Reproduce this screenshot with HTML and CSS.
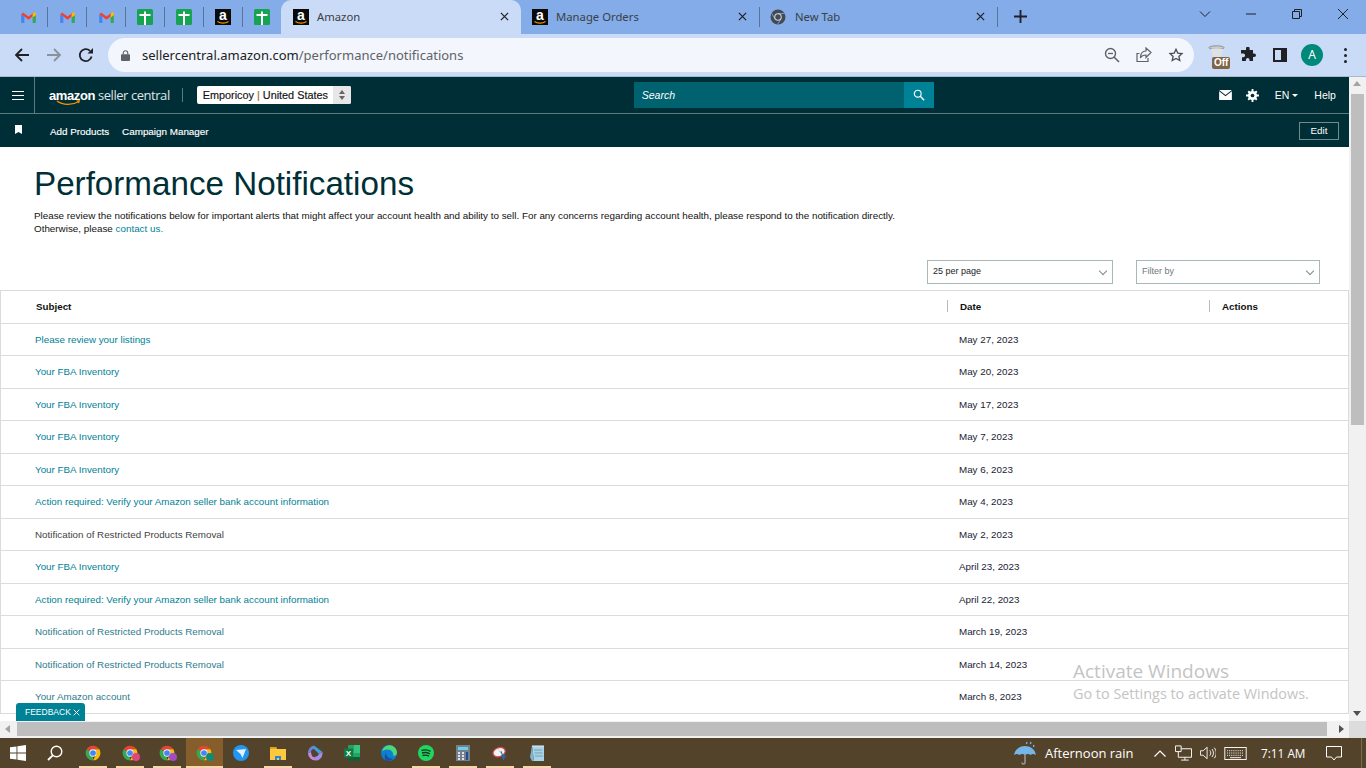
FILE: index.html
```html
<!DOCTYPE html>
<html>
<head>
  <title>Amazon</title>
  <link rel="stylesheet" href="styles.css">
</head>
<body>
  <!-- shared icons -->
  <svg class="icon-defs" width="0" height="0">
    <symbol id="gmail" viewBox="0 0 16 12">
      <path d="M0 3v8a1 1 0 0 0 1 1h2.500V5z" fill="#4285f4"/>
      <path d="M16 3v8a1 1 0 0 1-1 1h-2.500V5z" fill="#34a853"/>
      <path d="M0 3l2-2.500L8 5l6-4.500L12.500 5 8 8.500 3.500 5 0 3z" fill="#ea4335"/>
      <path d="M12.500 2l1.500-1.500c1-.6 2 .2 2 1.200V3.500l-3.500 2.500z" fill="#fbbc04"/>
    </symbol>
    <symbol id="sheet" viewBox="0 0 16 16">
      <rect width="16" height="16" rx="1.500" fill="#16a352"/>
      <path d="M7 2.500h2V5h4.500v2H9v9H7V7H2.500V5H7z" fill="#fff"/>
    </symbol>
    <symbol id="smile" viewBox="0 0 12 3">
      <path d="M.5 .5c3 2.200 8 2.200 11 0" fill="none" stroke="#f79400" stroke-width="1.200"/>
    </symbol>
    <symbol id="chrome" viewBox="0 0 24 24">
      <path d="M2.470 6.500A11 11 0 0 1 21.530 6.500H12A5.500 5.500 0 0 0 7.240 9.250z" fill="#ea4335"/>
      <path d="M21.530 6.500A11 11 0 0 1 12 23L16.760 14.750A5.500 5.500 0 0 0 12 6.500z" fill="#fbbc04"/>
      <path d="M12 23A11 11 0 0 1 2.470 6.500L7.240 9.250A5.500 5.500 0 0 0 12 17.500z" fill="#34a853"/>
      <circle cx="12" cy="12" r="5.500" fill="#fff"/>
      <circle cx="12" cy="12" r="4.300" fill="#4285f4"/>
    </symbol>
    <symbol id="close" viewBox="0 0 10 10">
      <path d="M1 1l8 8M9 1l-8 8" fill="none" stroke="currentColor" stroke-width="1.400"/>
    </symbol>
  </svg>

  <div class="tabstrip">
    <div class="pinned"><svg class="fav-m"><use href="#gmail"/></svg></div>
    <div class="pinned"><svg class="fav-m"><use href="#gmail"/></svg></div>
    <div class="pinned"><svg class="fav-m"><use href="#gmail"/></svg></div>
    <div class="pinned"><svg class="fav"><use href="#sheet"/></svg></div>
    <div class="pinned"><svg class="fav"><use href="#sheet"/></svg></div>
    <div class="pinned"><span class="amz-fav">a<svg class="amz-smile"><use href="#smile"/></svg></span></div>
    <div class="pinned last"><svg class="fav"><use href="#sheet"/></svg></div>
    <div class="tab active">
      <span class="amz-fav">a<svg class="amz-smile"><use href="#smile"/></svg></span>
      <span class="tab-title">Amazon</span>
      <svg class="tab-close"><use href="#close"/></svg>
    </div>
    <div class="tab divided">
      <span class="amz-fav">a<svg class="amz-smile"><use href="#smile"/></svg></span>
      <span class="tab-title">Manage Orders</span>
      <svg class="tab-close"><use href="#close"/></svg>
    </div>
    <div class="tab divided">
      <svg class="fav" viewBox="0 0 16 16">
        <circle cx="8" cy="8" r="7.500" fill="#454a50"/>
        <path d="M8 4.500h6.500M5 10L1.800 4.500M11 10l-3.200 5" stroke="#83ace9" stroke-width=".8"/>
        <circle cx="8" cy="8" r="3.800" fill="#c5d6ef"/>
        <circle cx="8" cy="8" r="2.700" fill="#454a50"/>
      </svg>
      <span class="tab-title">New Tab</span>
      <svg class="tab-close"><use href="#close"/></svg>
    </div>
    <svg class="new-tab" viewBox="0 0 14 14"><path d="M7 0v14M0 7h14" stroke="#202124" stroke-width="2"/></svg>
    <div class="win-controls">
      <svg class="win-btn" viewBox="0 0 12 12"><path d="M1 3.500l5 5 5-5" fill="none" stroke="#202124"/></svg>
      <svg class="win-btn" viewBox="0 0 12 12"><path d="M1 6h10" stroke="#202124"/></svg>
      <svg class="win-btn" viewBox="0 0 12 12"><path d="M1.500 3.500h7v7h-7zM3.500 3.500v-2h7v7h-2" fill="none" stroke="#202124"/></svg>
      <svg class="win-btn" viewBox="0 0 12 12"><path d="M1 1l10 10M11 1L1 11" stroke="#202124"/></svg>
    </div>
  </div>

  <div class="toolbar">
    <div class="tb-btn"><svg viewBox="0 0 16 16" class="tb-ico"><path d="M15 8H2M8 2L2 8l6 6" fill="none" stroke="#202124" stroke-width="1.800"/></svg></div>
    <div class="tb-btn"><svg viewBox="0 0 16 16" class="tb-ico"><path d="M1 8h13M8 2l6 6-6 6" fill="none" stroke="#8a919b" stroke-width="1.800"/></svg></div>
    <div class="tb-btn"><svg viewBox="0 0 16 16" class="tb-ico"><path d="M13.600 9.500A6 6 0 1 1 12 3.800" fill="none" stroke="#202124" stroke-width="1.800"/><path d="M9.500 6.500H15V1z" fill="#202124"/></svg></div>
    <div class="address">
      <svg class="lock" viewBox="0 0 10 12"><path d="M2.500 5V3.300a2.500 2.500 0 0 1 5 0V5" fill="none" stroke="#5f6368" stroke-width="1.200"/><rect y="4.500" width="10" height="7.500" rx="1" fill="#5f6368"/></svg>
      <span class="url"><span class="url-host">sellercentral.amazon.com</span>/performance/notifications</span>
      <svg class="addr-ico" viewBox="0 0 16 16"><circle cx="6.500" cy="6.500" r="5" fill="none" stroke="#5f6368" stroke-width="1.400"/><path d="M10 10l5 5" stroke="#5f6368" stroke-width="1.600"/><path d="M4 6.500h5" stroke="#5f6368" stroke-width="1.300"/></svg>
      <svg class="addr-ico" viewBox="0 0 16 16"><path d="M5 14.500H1V6.500h2.500M15 5.500L10 1v3C6.500 4 4.500 6.500 4.500 11c1.200-2.500 3-3 5.500-3v2.500z" fill="none" stroke="#5f6368" stroke-width="1.200"/><path d="M1 14.500h11V11" fill="none" stroke="#5f6368" stroke-width="1.200"/></svg>
      <svg class="addr-ico" viewBox="0 0 16 16"><path d="M8 2.200l1.800 3.900 4.200.5-3.100 2.800.9 4.200L8 11.500l-3.800 2.100.9-4.200L2 6.600l4.200-.5z" fill="none" stroke="#4a4e53" stroke-width="1.300"/></svg>
    </div>
    <div class="tb-btn cup">
      <svg class="cup-ico" viewBox="0 0 18 12"><ellipse cx="9" cy="2.500" rx="8" ry="2" fill="#c9ccd0" stroke="#8d8d8d"/><path d="M3 4l2 8h9l2-8" fill="#dfe1e4"/></svg>
      <span class="off-badge">Off</span>
    </div>
    <div class="tb-btn puzzle"><svg viewBox="0 0 16 16" class="tb-ico"><path d="M6 1.500a1.800 1.800 0 0 1 3.600 0V3H13v3.500h1.200a1.800 1.800 0 0 1 0 3.600H13V14H9.500v-1.200a1.800 1.800 0 0 0-3.600 0V14H2v-3.800h1.200a1.900 1.900 0 0 0 0-3.800H1V3h5z" fill="#202124"/></svg></div>
    <div class="tb-btn"><svg viewBox="0 0 14 14" class="tb-ico side"><path d="M0 0h14v14H0zM2 2v10h6V2z" fill="#202124" fill-rule="evenodd"/></svg></div>
    <div class="tb-btn"><span class="avatar">A</span></div>
    <div class="tb-btn dots"><i></i><i></i><i></i></div>
  </div>

  <div class="view">
    <div class="page">
      <div class="sc-top">
        <div class="burger"><i></i><i></i><i></i></div>
        <div class="logo">
          <span class="logo-amz">amazon</span><span class="logo-sc">seller central</span>
          <svg class="logo-smile" viewBox="0 0 26 6"><path d="M1 1c6 4.500 16 4.500 23 .5" fill="none" stroke="#f79400" stroke-width="1.200"/><path d="M21 .5l4-.5-1 3.500" fill="#f79400"/></svg>
        </div>
        <span class="logo-sep"></span>
        <div class="acct">
          <span class="acct-name">Emporicoy <b>|</b> United States</span>
          <span class="acct-arrows"><i class="up"></i><i class="down"></i></span>
        </div>
        <div class="search">
          <span class="search-input">Search</span>
          <span class="search-btn"><svg viewBox="0 0 14 14"><circle cx="5.500" cy="5.500" r="4" fill="none" stroke="#fff" stroke-width="1.300"/><path d="M8.500 8.500l4.500 4.500" stroke="#fff" stroke-width="1.700"/></svg></span>
        </div>
        <div class="top-right">
          <svg class="mail" viewBox="0 0 14 11"><path d="M0 0h14L7 5.500z M0 1.500V11h14V1.500L7 7z" fill="#fff"/></svg>
          <svg class="gear" viewBox="0 0 14 14"><circle cx="7" cy="7" r="4.900" fill="#fff"/><path d="M6 0h2v14H6zM0 6h14v2H0zM1.700 3.100l1.400-1.400 9.200 9.200-1.400 1.400zM10.900 1.700l1.400 1.400-9.200 9.200-1.400-1.400z" fill="#fff"/><circle cx="7" cy="7" r="2" fill="#002e36"/></svg>
          <span class="lang">EN</span><i class="lang-caret"></i>
          <span class="help">Help</span>
        </div>
      </div>
      <div class="sc-nav">
        <svg class="bookmark" viewBox="0 0 7 9"><path d="M0 0h7v9L3.500 7 0 9z" fill="#fff"/></svg>
        <a class="nav-link first">Add Products</a>
        <a class="nav-link">Campaign Manager</a>
        <span class="edit-btn">Edit</span>
      </div>

      <div class="head">
        <h1>Performance Notifications</h1>
        <p>Please review the notifications below for important alerts that might affect your account health and ability to sell. For any concerns regarding account health, please respond to the notification directly.<br>Otherwise, please <a class="link">contact us.</a></p>
      </div>

      <div class="filters">
        <div class="select">25 per page<i class="chev"></i></div>
        <div class="select muted">Filter by<i class="chev"></i></div>
      </div>

      <div class="table">
        <div class="row th">
          <div class="cell">Subject</div>
          <div class="cell sep">Date</div>
          <div class="cell sep">Actions</div>
        </div>
        <div class="row"><div class="cell link">Please review your listings</div><div class="cell date">May 27, 2023</div><div class="cell"></div></div>
        <div class="row"><div class="cell link">Your FBA Inventory</div><div class="cell date">May 20, 2023</div><div class="cell"></div></div>
        <div class="row"><div class="cell link">Your FBA Inventory</div><div class="cell date">May 17, 2023</div><div class="cell"></div></div>
        <div class="row"><div class="cell link">Your FBA Inventory</div><div class="cell date">May 7, 2023</div><div class="cell"></div></div>
        <div class="row"><div class="cell link">Your FBA Inventory</div><div class="cell date">May 6, 2023</div><div class="cell"></div></div>
        <div class="row"><div class="cell link">Action required: Verify your Amazon seller bank account information</div><div class="cell date">May 4, 2023</div><div class="cell"></div></div>
        <div class="row"><div class="cell plain">Notification of Restricted Products Removal</div><div class="cell date">May 2, 2023</div><div class="cell"></div></div>
        <div class="row"><div class="cell link">Your FBA Inventory</div><div class="cell date">April 23, 2023</div><div class="cell"></div></div>
        <div class="row"><div class="cell link">Action required: Verify your Amazon seller bank account information</div><div class="cell date">April 22, 2023</div><div class="cell"></div></div>
        <div class="row"><div class="cell seen">Notification of Restricted Products Removal</div><div class="cell date">March 19, 2023</div><div class="cell"></div></div>
        <div class="row"><div class="cell seen">Notification of Restricted Products Removal</div><div class="cell date">March 14, 2023</div><div class="cell"></div></div>
        <div class="row"><div class="cell seen">Your Amazon account</div><div class="cell date">March 8, 2023</div><div class="cell"></div></div>
      </div>

      <div class="feedback">FEEDBACK<svg class="fb-close"><use href="#close"/></svg></div>
      <div class="activate">
        <div class="activate-big">Activate Windows</div>
        <div class="activate-small">Go to Settings to activate Windows.</div>
      </div>
    </div>
    <div class="vscroll">
      <i class="arrow up"></i>
      <div class="vthumb"></div>
      <i class="arrow down"></i>
    </div>
  </div>

  <div class="hscroll">
    <i class="arrow left"></i>
    <div class="hthumb"></div>
    <i class="arrow right"></i>
    <div class="corner"></div>
  </div>

  <div class="taskbar">
    <div class="task start"><svg class="task-ico" viewBox="0 0 16 16"><path d="M0 2.300l6.500-.9v6.200H0zM7.400 1.300L16 0v7.600H7.400zM0 8.400h6.500v6.200L0 13.700zM7.400 8.400H16V16l-8.600-1.200z" fill="#fff"/></svg></div>
    <div class="task search-task"><svg class="task-ico" viewBox="0 0 16 16"><circle cx="9.500" cy="6.500" r="5.300" fill="none" stroke="#fff" stroke-width="1.400"/><path d="M5.700 10.300L1 15" stroke="#fff" stroke-width="1.800"/></svg></div>
    <div class="task on"><svg class="task-ico"><use href="#chrome"/></svg></div>
    <div class="task on"><svg class="task-ico"><use href="#chrome"/></svg><i class="profile pink"></i></div>
    <div class="task on"><svg class="task-ico"><use href="#chrome"/></svg><i class="profile purple"></i></div>
    <div class="task current"><svg class="task-ico"><use href="#chrome"/></svg><i class="profile teal"></i></div>
    <div class="task"><svg class="task-ico" viewBox="0 0 16 16"><circle cx="8" cy="8" r="8" fill="#2196f3"/><path d="M3 5l10-1-3.500 9-2-4z" fill="#e3f2fd"/></svg></div>
    <div class="task on"><svg class="task-ico" viewBox="0 0 16 16"><path d="M0 2h6l1 2h9v11H0z" fill="#ffc83d"/><path d="M0 2h6l1 2H0z" fill="#e2a21b"/><path d="M5 15v-4h6v4h-2v-2H7v2z" fill="#2b88d8"/></svg></div>
    <div class="task"><svg class="task-ico" viewBox="0 0 16 16"><path d="M7 .5a7.500 7.500 0 0 0-6 8l3-1.500C4 5 5.500 4 7 4z" fill="#6f7fdc"/><path d="M7 .5L15.500 7 12 9 7 4z" fill="#3aa0e0"/><path d="M15.500 7v2a7 7 0 0 1-7 6.500L7 12c2.500 0 4-1 5-3z" fill="#a98ae6"/><path d="M1 8.500A7.500 7.500 0 0 0 8.500 15.500L7 12C5.500 12 4.500 11 4 7z" fill="#c58ae0"/></svg></div>
    <div class="task"><svg class="task-ico" viewBox="0 0 16 16"><rect x="4" width="12" height="16" rx="1" fill="#21a366"/><path d="M10 0h6v8h-6z" fill="#33c481"/><path d="M4 12h12v4H4z" fill="#185c37"/><rect y="3.500" width="9" height="9" fill="#107c41"/><text x="4.500" y="10.700" text-anchor="middle" font-family="Liberation Sans" font-weight="700" font-size="8" fill="#fff">X</text></svg></div>
    <div class="task"><svg class="task-ico" viewBox="0 0 16 16"><circle cx="8" cy="8" r="8" fill="#0d7fd0"/><path d="M1 6.500C2 2 6 0 9 .3c4 .4 7 3.500 7 7.700 0 2-2 3-4 2.500C13 8 10 4 6 4.500 3.500 4.800 2 5.500 1 6.500z" fill="#4dd67c"/><path d="M5 7.500c0 4 3 6 7 6-1.200 1.500-3 2.500-5 2.500-3 0-4.500-4-2-8.500z" fill="#1a4fa0"/></svg></div>
    <div class="task on"><svg class="task-ico" viewBox="0 0 16 16"><circle cx="8" cy="8" r="8" fill="#1ed760"/><path d="M3.500 5.500c3-1 6.500-.7 9 .8M4 8c2.500-.8 5.500-.5 7.800.8M4.500 10.500c2-.6 4.500-.4 6.500.7" fill="none" stroke="#17331f" stroke-width="1.400"/></svg></div>
    <div class="task on"><svg class="task-ico" viewBox="0 0 14 16"><rect width="14" height="16" fill="#75808c"/><rect x="2" y="2" width="10" height="3" fill="#6ed0e8"/><path d="M2 7h2v2H2zM6 7h2v2H6zM2 10h2v2H2zM6 10h2v2H6zM2 13h2v2H2zM6 13h2v2H6z" fill="#dfe5ea"/><rect x="10" y="7" width="2" height="8" fill="#1f4e96"/></svg></div>
    <div class="task on"><svg class="task-ico" viewBox="0 0 18 16"><ellipse cx="8" cy="7" rx="7" ry="5" fill="#f3f3f3" stroke="#d9434e" stroke-width="1.300" transform="rotate(-20 8 7)"/><path d="M7 4l3 4" stroke="#c9c9c9"/><circle cx="13" cy="12" r="1.800" fill="none" stroke="#1f6fb5" stroke-width="1.200"/><path d="M10 6l3 7v3" fill="none" stroke="#1f6fb5" stroke-width="1.200"/></svg></div>
    <div class="task on"><svg class="task-ico" viewBox="0 0 16 16"><path d="M3 1h12v15H5z" fill="#a9d4e8"/><path d="M3 1L1 12l2 4h2z" fill="#7fb4cc"/><path d="M5 5h8M5.500 8h8M6 11h8" stroke="#5e93ad" stroke-width=".8"/><path d="M4 0v2M6 0v2M8 0v2M10 0v2M12 0v2M14 0v2" stroke="#e6eef3"/></svg></div>

    <div class="tray">
      <svg class="umbrella" viewBox="0 0 24 24"><path d="M1 14C2 8 7 5 12 5s10 3 11 9c-2-1.500-4-1.500-5.500 0-1.500-1.500-4-1.500-5.500 0-1.500-1.500-4-1.500-5.500 0C5 12.500 3 12.500 1 14z" fill="#74b6e8"/><path d="M12 13v8.500a1.500 1.500 0 0 1-3 0" fill="none" stroke="#9a9a9a" stroke-width="1.500"/><path d="M14 1l-.6 2M18 1l-.6 2M21 4l-.6 2" stroke="#74b6e8" stroke-width="1.300"/></svg>
      <span class="weather">Afternoon rain</span>
      <svg class="tray-chev" viewBox="0 0 12 7"><path d="M.5 6.500L6 1l5.500 5.500" fill="none" stroke="#fff" stroke-width="1.200"/></svg>
      <svg class="tray-net" viewBox="0 0 18 16"><path d="M.5.500h6v6h-6zM6.500 3.500h11v9h-14v-6M10.500 12.500v3M6.500 15.500h8" fill="none" stroke="#fff"/></svg>
      <svg class="tray-vol" viewBox="0 0 18 14"><path d="M.5 4.500h3L8 .5v13l-4.500-4h-3zM11 4c1.500 2 1.500 4 0 6M13.500 2.500c2.200 3 2.200 6 0 9M16 1c3 4 3 8 0 12" fill="none" stroke="#fff"/></svg>
      <svg class="tray-kb" viewBox="0 0 24 14"><rect x=".5" y=".5" width="23" height="13" fill="none" stroke="#fff"/><path d="M3 4h18M3 6.500h18M3 9h18" stroke="#fff" stroke-dasharray="1 1"/><path d="M6 11.500h12" stroke="#fff"/></svg>
      <span class="clock">7:11 AM</span>
      <svg class="tray-note" viewBox="0 0 16 15"><path d="M.5.500h15v10.500h-5L8 14l-2.500-3H.5z" fill="none" stroke="#fff"/></svg>
      <span class="show-desktop"></span>
    </div>
  </div>
</body>
</html>
```

FILE: styles.css
```css
html, body {
  margin: 0;
  height: 768px;
  overflow: hidden;
}

body {
  font-family: "Liberation Sans", Arial, sans-serif;
  font-size: 9.8px;
  color: #111;
  background-color: #fff;
}

i {
  display: block;
}

a {
  text-decoration: none;
}

.icon-defs {
  display: block;
  height: 0;
}

/* browser tabs */
.tabstrip {
  height: 34px;
  display: flex;
  padding-left: 8px;
  background-color: #83ace9;
  font-family: "Noto Sans", sans-serif;
}

.pinned {
  width: 39px;
  height: 34px;
  box-sizing: border-box;
  padding-left: 12px;
  display: flex;
  align-items: center;
  position: relative;
}

.pinned::after,
.tab.divided::after {
  content: "";
  position: absolute;
  right: -1px;
  top: 7px;
  width: 1px;
  height: 20px;
  background-color: #5b7397;
}

.pinned.last::after {
  display: none;
}

.fav {
  width: 16px;
  height: 16px;
  flex: none;
}

.fav-m {
  width: 15px;
  height: 11px;
  margin-left: 1px;
}

.amz-fav {
  width: 16px;
  height: 16px;
  flex: none;
  position: relative;
  background-color: #0a0a0a;
  color: #fff;
  text-align: center;
  font-family: "Liberation Sans", sans-serif;
  font-size: 14px;
  font-weight: bold;
  line-height: 13px;
}

.amz-smile {
  position: absolute;
  left: 2px;
  bottom: 1px;
  width: 12px;
  height: 3px;
}

.tab {
  width: 240px;
  height: 34px;
  box-sizing: border-box;
  padding: 0 9px 1px 12px;
  display: flex;
  align-items: center;
  position: relative;
  color: #3c4043;
  font-size: 11.300px;
}

.tab.active {
  height: 38px;
  padding-bottom: 5px;
  background-color: #c9dbf6;
  border-radius: 10px 10px 0 0;
}

.tab.divided {
  width: 238px;
  padding-left: 11px;
  padding-right: 9px;
}

.tab-title {
  margin-left: 8px;
  flex: 1;
}

.tab.divided .tab-title {
  margin-left: 9px;
}

.tab.divided .amz-fav {
  margin-right: -1px;
}

.tab-close {
  width: 9px;
  height: 9px;
  color: #202124;
  margin-right: 3px;
}

.new-tab {
  width: 13px;
  height: 13px;
  margin: 10px 0 0 17px;
}

.win-controls {
  margin-left: auto;
  display: flex;
}

.win-btn {
  width: 12px;
  height: 12px;
  padding: 8px 17px 14px;
}

/* address bar row */
.toolbar {
  height: 43px;
  box-sizing: border-box;
  padding: 4px 0 4px 6px;
  display: flex;
  background-color: #c9dbf6;
  border-bottom: 1px solid #a9b8cc;
}

.tb-btn {
  width: 32px;
  height: 34px;
  display: flex;
  align-items: center;
  justify-content: center;
  flex: none;
  position: relative;
}

.tb-ico {
  width: 16px;
  height: 16px;
}

.tb-ico.side {
  width: 14px;
  height: 14px;
}

.address {
  width: 1086px;
  height: 34px;
  margin: 0 9px 0 6px;
  box-sizing: border-box;
  padding: 0 10px 0 13px;
  display: flex;
  align-items: center;
  flex: none;
  background-color: #f3f6fc;
  border-radius: 17px;
}

.lock {
  width: 9px;
  height: 11px;
}

.url {
  margin-left: 12px;
  flex: 1;
  font-family: "Noto Sans", sans-serif;
  font-size: 13px;
  color: #5f6368;
}

.url-host {
  color: #202124;
}

.addr-ico {
  width: 16px;
  height: 16px;
  margin-left: 16px;
}

.cup-ico {
  width: 17px;
  height: 12px;
  margin: -8px 0 0 -6px;
}

.off-badge {
  position: absolute;
  left: 9px;
  top: 19px;
  padding: 0 2px;
  border-radius: 2px;
  background-color: #7f6446;
  color: #fff;
  font-size: 10px;
  font-weight: bold;
  line-height: 12px;
}

.puzzle {
  margin-left: -3px;
}

.avatar {
  width: 22px;
  height: 22px;
  border-radius: 50%;
  background-color: #00897b;
  color: #fff;
  text-align: center;
  font-family: "Noto Sans", sans-serif;
  font-size: 12px;
  line-height: 22px;
}

.dots {
  margin-left: 1px;
  flex-direction: column;
  gap: 3px;
}

.dots i {
  width: 3px;
  height: 3px;
  border-radius: 50%;
  background-color: #202124;
}

/* the page */
.view {
  height: 644px;
  display: flex;
}

.page {
  width: 1349px;
  height: 644px;
  position: relative;
  overflow: hidden;
}

.sc-top {
  height: 36px;
  display: flex;
  align-items: center;
  background-color: #002e36;
  border-bottom: 1px solid #5b7a7e;
  color: #fff;
}

.burger {
  width: 35px;
  height: 36px;
  box-sizing: border-box;
  padding: 14px 0 0 12px;
  border-right: 1px solid #5b7a7e;
}

.burger i {
  width: 12px;
  height: 1px;
  background-color: #fff;
  margin-bottom: 3px;
}

.logo {
  margin-left: 14px;
  position: relative;
  display: flex;
  align-items: baseline;
  white-space: nowrap;
}

.logo-amz {
  font-size: 13px;
  font-weight: bold;
  letter-spacing: -0.4px;
}

.logo-sc {
  margin-left: 3px;
  font-family: "Open Sans", sans-serif;
  font-size: 13px;
  letter-spacing: -0.45px;
  color: #dfe5e6;
}

.logo-smile {
  position: absolute;
  left: 7px;
  top: 14px;
  width: 25px;
  height: 6px;
}

.logo-sep {
  width: 1px;
  height: 14px;
  margin-left: 12px;
  background-color: #5b7a7e;
}

.acct {
  width: 154px;
  height: 18px;
  margin-left: 14px;
  display: flex;
  align-items: center;
  background-color: #fff;
  border-radius: 2px;
  color: #111;
}

.acct-name {
  flex: 1;
  padding-left: 6px;
  font-size: 10.850px;
  -webkit-text-stroke: 0.15px #111;
}

.acct-name b {
  font-weight: normal;
  color: #c07a20;
}

.acct-arrows {
  width: 18px;
  height: 18px;
  border-radius: 0 2px 2px 0;
  background-color: #e7e7e7;
  display: flex;
  flex-direction: column;
  align-items: center;
  justify-content: center;
  gap: 2px;
}

.acct-arrows .up {
  border: 3.500px solid transparent;
  border-top: 0;
  border-bottom: 4px solid #666;
}

.acct-arrows .down {
  border: 3.500px solid transparent;
  border-bottom: 0;
  border-top: 4px solid #666;
}

.search {
  width: 300px;
  height: 26px;
  margin-left: 283px;
  display: flex;
  flex: none;
}

.search-input {
  flex: 1;
  padding-left: 8px;
  background-color: #00626f;
  font-size: 10.500px;
  font-style: italic;
  line-height: 26px;
}

.search-btn {
  width: 30px;
  background-color: #008296;
  display: flex;
  align-items: center;
  justify-content: center;
}

.search-btn svg {
  width: 12px;
  height: 12px;
}

.top-right {
  flex: 1;
  display: flex;
  align-items: center;
  padding-left: 285px;
  font-size: 10.500px;
}

.mail {
  width: 13px;
  height: 10px;
}

.gear {
  width: 13px;
  height: 13px;
  margin-left: 14px;
}

.lang {
  margin-left: 16px;
}

.lang-caret {
  margin-left: 3px;
  border: 3px solid transparent;
  border-bottom: 0;
  border-top: 3px solid #fff;
}

.help {
  margin-left: 16px;
}

.sc-nav {
  height: 33px;
  display: flex;
  align-items: center;
  background-color: #002e36;
  color: #fff;
}

.bookmark {
  width: 7px;
  height: 9px;
  margin: -2px 0 0 15px;
}

.nav-link {
  margin: 1px 0 0 13px;
  font-size: 9.850px;
  -webkit-text-stroke: 0.15px #fff;
}

.nav-link.first {
  margin-left: 28px;
}

.edit-btn {
  width: 38px;
  height: 16px;
  margin: 0 10px 0 auto;
  border: 1px solid #6f8b8f;
  text-align: center;
  line-height: 16px;
}

.head {
  padding: 17px 0 0 34px;
}

.head h1 {
  margin: 0;
  font-size: 33.200px;
  font-weight: normal;
  line-height: 40px;
  color: #002f36;
}

.head p {
  margin: 5px 0 0;
  font-size: 9.860px;
  line-height: 13px;
  color: #111;
}

.link {
  color: #008296;
}

.seen {
  color: #2f7c8c;
}

.plain {
  color: #444;
}

.filters {
  display: flex;
  justify-content: flex-end;
  gap: 23px;
  margin-top: 25px;
  padding-right: 29px;
}

.select {
  width: 186px;
  height: 24px;
  box-sizing: border-box;
  padding: 0 0 2px 5px;
  display: flex;
  align-items: center;
  justify-content: space-between;
  border: 1px solid #a6b8b8;
  font-size: 9px;
  color: #222;
}

.select + .select {
  width: 184px;
}

.select.muted {
  color: #6f7a80;
}

.chev {
  width: 5px;
  height: 5px;
  margin: 3px 6px 3px 0;
  border-right: 1px solid #7b8a8c;
  border-bottom: 1px solid #7b8a8c;
  transform: rotate(45deg);
}

.table {
  margin: 6px 0 0;
  width: 1349px;
  box-sizing: border-box;
  border: 1px solid #d9dcdc;
  border-bottom: 0;
}

.row {
  height: 32.500px;
  box-sizing: border-box;
  display: grid;
  grid-template-columns: 946px 262px 1fr;
  border-bottom: 1px solid #d9dcdc;
}

.cell {
  display: flex;
  align-items: center;
  padding-left: 34px;
  position: relative;
}

.date {
  padding-left: 12px;
  color: #223;
}

.th {
  font-weight: bold;
  color: #111;
}

.th .cell:first-child {
  padding-left: 35px;
}

.cell.sep {
  padding-left: 13px;
}

.cell.sep::before {
  content: "";
  position: absolute;
  left: 0;
  top: 9px;
  width: 1px;
  height: 12px;
  background-color: #b6bcbc;
}

.feedback {
  position: absolute;
  left: 16px;
  top: 626px;
  width: 69px;
  height: 18px;
  box-sizing: border-box;
  padding-left: 9px;
  display: flex;
  align-items: center;
  background-color: #008296;
  border-radius: 3px 3px 0 0;
  color: #fff;
  font-size: 8.500px;
}

.fb-close {
  width: 7px;
  height: 7px;
  margin-left: 2px;
  color: #fff;
}

.activate {
  position: absolute;
  left: 1073px;
  top: 581px;
  font-family: "Open Sans", sans-serif;
  color: #c4c4c4;
  white-space: nowrap;
}

.activate-big {
  font-size: 19px;
  line-height: 26px;
}

.activate-small {
  font-size: 14.400px;
  line-height: 19px;
}

/* scrollbars */
.vscroll {
  width: 17px;
  position: relative;
  background-color: #f1f1f1;
}

.vthumb {
  position: absolute;
  left: 2px;
  top: 17px;
  width: 13px;
  height: 331px;
  background-color: #bebebe;
}

.arrow {
  position: absolute;
  border: 4px solid transparent;
}

.vscroll .arrow.up {
  left: 4px;
  top: 4px;
  border-top: 0;
  border-bottom: 5px solid #a3a3a3;
}

.vscroll .arrow.down {
  left: 4px;
  bottom: 5px;
  border-bottom: 0;
  border-top: 5px solid #505050;
}

.hscroll {
  height: 17px;
  position: relative;
  background-color: #f1f1f1;
}

.hthumb {
  position: absolute;
  left: 17px;
  top: 1px;
  width: 1310px;
  height: 14px;
  background-color: #bebebe;
}

.hscroll .arrow.left {
  left: 5px;
  top: 4px;
  border-left: 0;
  border-right: 5px solid #a3a3a3;
}

.hscroll .arrow.right {
  left: 1339px;
  top: 4px;
  border-right: 0;
  border-left: 5px solid #505050;
}

.corner {
  position: absolute;
  right: 0;
  top: 0;
  width: 17px;
  height: 17px;
  background-color: #dcdcdc;
}

/* windows taskbar */
.taskbar {
  height: 30px;
  display: flex;
  background-color: #54432b;
  color: #fff;
  font-family: "Open Sans", sans-serif;
}

.task {
  width: 37px;
  height: 30px;
  box-sizing: border-box;
  display: flex;
  align-items: center;
  justify-content: center;
  flex: none;
  position: relative;
}

.task.start {
  width: 36px;
}

.task.search-task {
  width: 38.500px;
}

.task.on::after {
  content: "";
  position: absolute;
  left: 4.500px;
  right: 4.500px;
  bottom: 0;
  height: 2px;
  background-color: #f7d6a9;
}

.task.current {
  background-color: #865e2c;
}

.task.current::after {
  content: "";
  position: absolute;
  left: 0;
  right: 0;
  bottom: 0;
  height: 2px;
  background-color: #f7d6a9;
}

.task-ico {
  width: 16px;
  height: 16px;
}

.profile {
  position: absolute;
  left: 20px;
  top: 15px;
  width: 8px;
  height: 8px;
  border-radius: 50%;
}

.profile.pink {
  background-color: #e0457b;
}

.profile.purple {
  background-color: #a34bc4;
}

.profile.teal {
  background-color: #0f8a78;
}

.tray {
  flex: 1;
  display: flex;
  align-items: center;
  font-size: 13px;
  padding-left: 457.500px;
}

.umbrella {
  width: 24px;
  height: 24px;
  flex: none;
}

.weather {
  margin-left: 8px;
  width: 100px;
  flex: none;
}

.tray-chev {
  width: 12px;
  height: 7px;
  margin-left: 9px;
}

.tray-net {
  width: 17px;
  height: 16px;
  margin-left: 9px;
}

.tray-vol {
  width: 16px;
  height: 14px;
  margin-left: 8px;
}

.tray-kb {
  width: 23px;
  height: 13px;
  margin-left: 8px;
}

.clock {
  margin-left: 14px;
  font-size: 11.800px;
}

.tray-note {
  width: 16px;
  height: 15px;
  margin-left: 21px;
}

.show-desktop {
  height: 30px;
  width: 4px;
  margin-left: auto;
  border-left: 1px solid #7a6a50;
}
```
